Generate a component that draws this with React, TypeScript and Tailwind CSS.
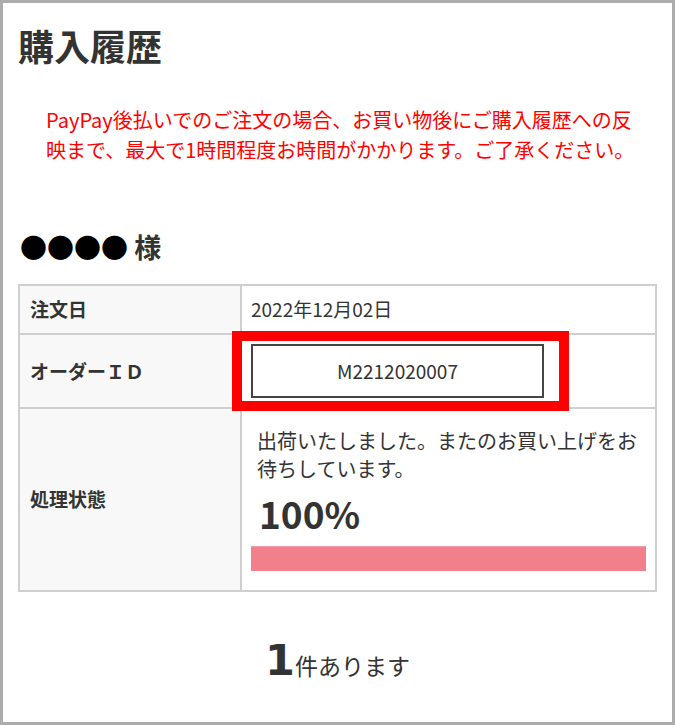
export default function App() {
  return (
    <div className="w-[675px] h-[725px] border-[3px] border-[#acacac] bg-white font-['Noto_Sans_CJK_JP',sans-serif] text-[#333]">
      <div className="px-[15px]">
        <h1 className="mt-[15px] text-[36px] leading-[54px] font-bold">購入履歴</h1>

        <p className="mt-[33px] pl-[28px] pr-[16px] text-[20px] leading-[30px] text-[#ff0000]">
          PayPay後払いでのご注文の場合、お買い物後にご購入履歴への反映まで、最大で1時間程度お時間がかかります。ご了承ください。
        </p>

        <div className="mt-[62px] pl-[2px] text-[27px] leading-[40px] font-bold">
          <span className="text-black">●●●●</span> 様
        </div>

        <div className="mt-[17px] border-2 border-[#cfcfcf]">
          <div className="flex h-[47px]">
            <div className="w-[222px] shrink-0 flex items-center pl-[10px] bg-[#f8f8f8] border-r-2 border-[#cfcfcf] text-[19px] font-bold">
              注文日
            </div>
            <div className="flex-1 flex items-center pl-[9px] text-[19px]">2022年12月02日</div>
          </div>

          <div className="flex h-[74px] border-t-2 border-[#cfcfcf]">
            <div className="w-[222px] shrink-0 flex items-center pl-[10px] bg-[#f8f8f8] border-r-2 border-[#cfcfcf] text-[19px] font-bold">
              オーダーＩＤ
            </div>
            <div className="flex-1 flex items-center pl-[9px]">
              <div className="relative w-[293px] h-[54px] border-2 border-[#444] flex items-center justify-center text-[19px]">
                M2212020007
                <div className="absolute -top-[15px] -bottom-[15px] -left-[21px] -right-[27px] border-[10px] border-[#ff0000]" />
              </div>
            </div>
          </div>

          <div className="flex h-[183px] border-t-2 border-[#cfcfcf]">
            <div className="w-[222px] shrink-0 flex items-center pl-[10px] bg-[#f8f8f8] border-r-2 border-[#cfcfcf] text-[19px] font-bold">
              処理状態
            </div>
            <div className="flex-1 px-[9px] pt-[18px] pb-[19px]">
              <p className="pl-[6px] pr-[2px] text-[20px] leading-[28px]">
                出荷いたしました。またのお買い上げをお待ちしています。
              </p>
              <div className="mt-[8px] pl-[8px] text-[37px] leading-[44px] font-bold">100%</div>
              <div className="mt-[11px] h-[25px] w-full bg-[#f2808c] border-t border-[#f59aa4]" />
            </div>
          </div>
        </div>

        <div className="mt-[38px] text-center leading-[60px]">
          <span className="font-['DejaVu_Sans',sans-serif] text-[43px] font-bold">1</span>
          <span className="text-[23px]">件あります</span>
        </div>
      </div>
    </div>
  );
}
